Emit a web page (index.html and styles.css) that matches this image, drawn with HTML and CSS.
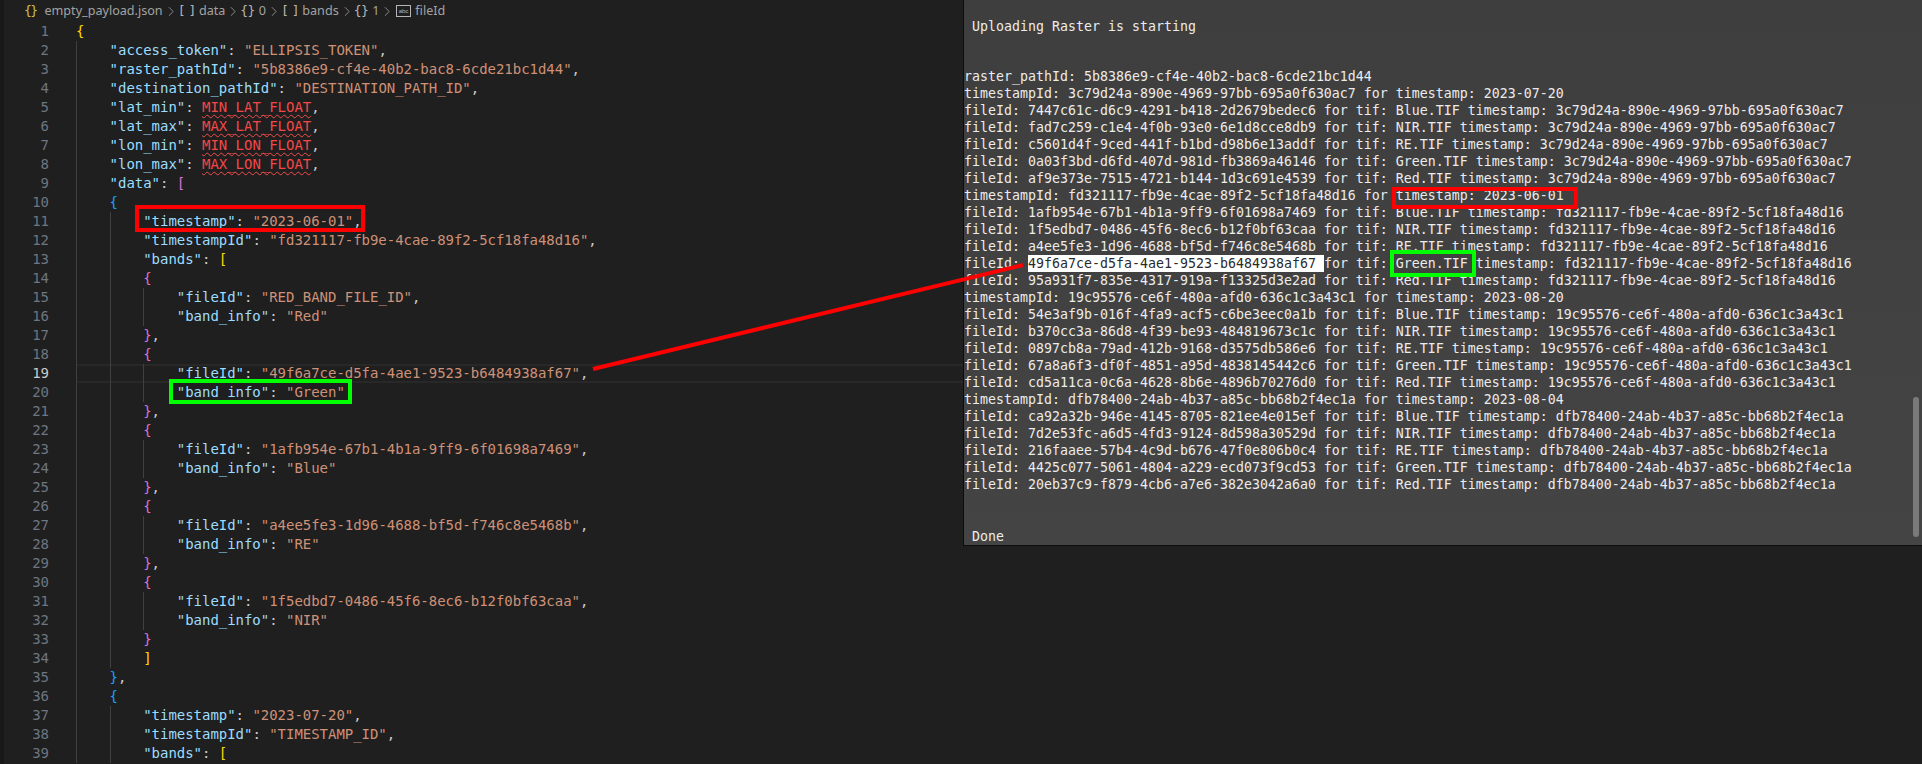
FILE: index.html
```html
<!DOCTYPE html>
<html lang="en">
<head>
<meta charset="utf-8">
<title>empty_payload.json</title>
<link rel="stylesheet" href="styles.css">
</head>
<body>
<main class="editor">
  <nav class="crumbs">
    <span class="ic json">{}</span><span class="c-name">empty_payload.json</span>
    <svg class="chev" viewBox="0 0 7 12"><path d="M1 1l5 5-5 5"/></svg>
    <span class="ic arr">[ ]</span><span>data</span>
    <svg class="chev" viewBox="0 0 7 12"><path d="M1 1l5 5-5 5"/></svg>
    <span class="ic">{}</span><span>0</span>
    <svg class="chev" viewBox="0 0 7 12"><path d="M1 1l5 5-5 5"/></svg>
    <span class="ic arr">[ ]</span><span>bands</span>
    <svg class="chev" viewBox="0 0 7 12"><path d="M1 1l5 5-5 5"/></svg>
    <span class="ic">{}</span><span>1</span>
    <svg class="chev" viewBox="0 0 7 12"><path d="M1 1l5 5-5 5"/></svg>
    <svg class="abc" viewBox="0 0 15 12"><rect x="0.5" y="0.5" width="14" height="11" fill="none" stroke="#b5b5b5"/><text x="7.5" y="8" text-anchor="middle" font-size="6" font-family="Liberation Sans" fill="#b5b5b5">abc</text></svg>
    <span>fileId</span>
  </nav>
  <div class="code">
    <div class="ln"><b>1</b><code><u class="gold">{</u></code></div>
    <div class="ln"><b>2</b><code><i></i><s>"access_token"</s>: <q>"ELLIPSIS_TOKEN"</q>,</code></div>
    <div class="ln"><b>3</b><code><i></i><s>"raster_pathId"</s>: <q>"5b8386e9-cf4e-40b2-bac8-6cde21bc1d44"</q>,</code></div>
    <div class="ln"><b>4</b><code><i></i><s>"destination_pathId"</s>: <q>"DESTINATION_PATH_ID"</q>,</code></div>
    <div class="ln"><b>5</b><code><i></i><s>"lat_min"</s>: <em>MIN_LAT_FLOAT</em>,</code></div>
    <div class="ln"><b>6</b><code><i></i><s>"lat_max"</s>: <em>MAX_LAT_FLOAT</em>,</code></div>
    <div class="ln"><b>7</b><code><i></i><s>"lon_min"</s>: <em>MIN_LON_FLOAT</em>,</code></div>
    <div class="ln"><b>8</b><code><i></i><s>"lon_max"</s>: <em>MAX_LON_FLOAT</em>,</code></div>
    <div class="ln"><b>9</b><code><i></i><s>"data"</s>: <u class="pink">[</u></code></div>
    <div class="ln"><b>10</b><code><i></i><u class="blue">{</u></code></div>
    <div class="ln"><b>11</b><code><i></i><i></i><s>"timestamp"</s>: <q>"2023-06-01"</q>,</code></div>
    <div class="ln"><b>12</b><code><i></i><i></i><s>"timestampId"</s>: <q>"fd321117-fb9e-4cae-89f2-5cf18fa48d16"</q>,</code></div>
    <div class="ln"><b>13</b><code><i></i><i></i><s>"bands"</s>: <u class="gold">[</u></code></div>
    <div class="ln"><b>14</b><code><i></i><i></i><u class="pink">{</u></code></div>
    <div class="ln"><b>15</b><code><i></i><i></i><i></i><s>"fileId"</s>: <q>"RED_BAND_FILE_ID"</q>,</code></div>
    <div class="ln"><b>16</b><code><i></i><i></i><i></i><s>"band_info"</s>: <q>"Red"</q></code></div>
    <div class="ln"><b>17</b><code><i></i><i></i><u class="pink">}</u>,</code></div>
    <div class="ln"><b>18</b><code><i></i><i></i><u class="pink">{</u></code></div>
    <div class="ln active"><b>19</b><code><i></i><i></i><i></i><s>"fileId"</s>: <q>"49f6a7ce-d5fa-4ae1-9523-b6484938af67"</q>,</code></div>
    <div class="ln"><b>20</b><code><i></i><i></i><i></i><s>"band_info"</s>: <q>"Green"</q></code></div>
    <div class="ln"><b>21</b><code><i></i><i></i><u class="pink">}</u>,</code></div>
    <div class="ln"><b>22</b><code><i></i><i></i><u class="pink">{</u></code></div>
    <div class="ln"><b>23</b><code><i></i><i></i><i></i><s>"fileId"</s>: <q>"1afb954e-67b1-4b1a-9ff9-6f01698a7469"</q>,</code></div>
    <div class="ln"><b>24</b><code><i></i><i></i><i></i><s>"band_info"</s>: <q>"Blue"</q></code></div>
    <div class="ln"><b>25</b><code><i></i><i></i><u class="pink">}</u>,</code></div>
    <div class="ln"><b>26</b><code><i></i><i></i><u class="pink">{</u></code></div>
    <div class="ln"><b>27</b><code><i></i><i></i><i></i><s>"fileId"</s>: <q>"a4ee5fe3-1d96-4688-bf5d-f746c8e5468b"</q>,</code></div>
    <div class="ln"><b>28</b><code><i></i><i></i><i></i><s>"band_info"</s>: <q>"RE"</q></code></div>
    <div class="ln"><b>29</b><code><i></i><i></i><u class="pink">}</u>,</code></div>
    <div class="ln"><b>30</b><code><i></i><i></i><u class="pink">{</u></code></div>
    <div class="ln"><b>31</b><code><i></i><i></i><i></i><s>"fileId"</s>: <q>"1f5edbd7-0486-45f6-8ec6-b12f0bf63caa"</q>,</code></div>
    <div class="ln"><b>32</b><code><i></i><i></i><i></i><s>"band_info"</s>: <q>"NIR"</q></code></div>
    <div class="ln"><b>33</b><code><i></i><i></i><u class="pink">}</u></code></div>
    <div class="ln"><b>34</b><code><i></i><i></i><u class="gold">]</u></code></div>
    <div class="ln"><b>35</b><code><i></i><u class="blue">}</u>,</code></div>
    <div class="ln"><b>36</b><code><i></i><u class="blue">{</u></code></div>
    <div class="ln"><b>37</b><code><i></i><i></i><s>"timestamp"</s>: <q>"2023-07-20"</q>,</code></div>
    <div class="ln"><b>38</b><code><i></i><i></i><s>"timestampId"</s>: <q>"TIMESTAMP_ID"</q>,</code></div>
    <div class="ln"><b>39</b><code><i></i><i></i><s>"bands"</s>: <u class="gold">[</u></code></div>
  </div>
</main>

<section class="term">
  <p class="note first">Uploading Raster is starting</p>
  <div class="log">
    <div>raster_pathId: 5b8386e9-cf4e-40b2-bac8-6cde21bc1d44</div>
    <div>timestampId: 3c79d24a-890e-4969-97bb-695a0f630ac7 for timestamp: 2023-07-20</div>
    <div>fileId: 7447c61c-d6c9-4291-b418-2d2679bedec6 for tif: Blue.TIF timestamp: 3c79d24a-890e-4969-97bb-695a0f630ac7</div>
    <div>fileId: fad7c259-c1e4-4f0b-93e0-6e1d8cce8db9 for tif: NIR.TIF timestamp: 3c79d24a-890e-4969-97bb-695a0f630ac7</div>
    <div>fileId: c5601d4f-9ced-441f-b1bd-d98b6e13addf for tif: RE.TIF timestamp: 3c79d24a-890e-4969-97bb-695a0f630ac7</div>
    <div>fileId: 0a03f3bd-d6fd-407d-981d-fb3869a46146 for tif: Green.TIF timestamp: 3c79d24a-890e-4969-97bb-695a0f630ac7</div>
    <div>fileId: af9e373e-7515-4721-b144-1d3c691e4539 for tif: Red.TIF timestamp: 3c79d24a-890e-4969-97bb-695a0f630ac7</div>
    <div>timestampId: fd321117-fb9e-4cae-89f2-5cf18fa48d16 for timestamp: 2023-06-01</div>
    <div>fileId: 1afb954e-67b1-4b1a-9ff9-6f01698a7469 for tif: Blue.TIF timestamp: fd321117-fb9e-4cae-89f2-5cf18fa48d16</div>
    <div>fileId: 1f5edbd7-0486-45f6-8ec6-b12f0bf63caa for tif: NIR.TIF timestamp: fd321117-fb9e-4cae-89f2-5cf18fa48d16</div>
    <div>fileId: a4ee5fe3-1d96-4688-bf5d-f746c8e5468b for tif: RE.TIF timestamp: fd321117-fb9e-4cae-89f2-5cf18fa48d16</div>
    <div>fileId: <span class="hl">49f6a7ce-d5fa-4ae1-9523-b6484938af67 </span>for tif: Green.TIF timestamp: fd321117-fb9e-4cae-89f2-5cf18fa48d16</div>
    <div>fileId: 95a931f7-835e-4317-919a-f13325d3e2ad for tif: Red.TIF timestamp: fd321117-fb9e-4cae-89f2-5cf18fa48d16</div>
    <div>timestampId: 19c95576-ce6f-480a-afd0-636c1c3a43c1 for timestamp: 2023-08-20</div>
    <div>fileId: 54e3af9b-016f-4fa9-acf5-c6be3eec0a1b for tif: Blue.TIF timestamp: 19c95576-ce6f-480a-afd0-636c1c3a43c1</div>
    <div>fileId: b370cc3a-86d8-4f39-be93-484819673c1c for tif: NIR.TIF timestamp: 19c95576-ce6f-480a-afd0-636c1c3a43c1</div>
    <div>fileId: 0897cb8a-79ad-412b-9168-d3575db586e6 for tif: RE.TIF timestamp: 19c95576-ce6f-480a-afd0-636c1c3a43c1</div>
    <div>fileId: 67a8a6f3-df0f-4851-a95d-4838145442c6 for tif: Green.TIF timestamp: 19c95576-ce6f-480a-afd0-636c1c3a43c1</div>
    <div>fileId: cd5a11ca-0c6a-4628-8b6e-4896b70276d0 for tif: Red.TIF timestamp: 19c95576-ce6f-480a-afd0-636c1c3a43c1</div>
    <div>timestampId: dfb78400-24ab-4b37-a85c-bb68b2f4ec1a for timestamp: 2023-08-04</div>
    <div>fileId: ca92a32b-946e-4145-8705-821ee4e015ef for tif: Blue.TIF timestamp: dfb78400-24ab-4b37-a85c-bb68b2f4ec1a</div>
    <div>fileId: 7d2e53fc-a6d5-4fd3-9124-8d598a30529d for tif: NIR.TIF timestamp: dfb78400-24ab-4b37-a85c-bb68b2f4ec1a</div>
    <div>fileId: 216faaee-57b4-4c9d-b676-47f0e806b0c4 for tif: RE.TIF timestamp: dfb78400-24ab-4b37-a85c-bb68b2f4ec1a</div>
    <div>fileId: 4425c077-5061-4804-a229-ecd073f9cd53 for tif: Green.TIF timestamp: dfb78400-24ab-4b37-a85c-bb68b2f4ec1a</div>
    <div>fileId: 20eb37c9-f879-4cb6-a7e6-382e3042a6a0 for tif: Red.TIF timestamp: dfb78400-24ab-4b37-a85c-bb68b2f4ec1a</div>
  </div>
  <p class="note last">Done</p>
  <div class="thumb"></div>
</section>

<div class="mark red mark-a"></div>
<div class="mark green mark-b"></div>
<div class="mark red mark-c"></div>
<div class="mark green mark-d"></div>
<svg class="arrow" viewBox="0 0 1922 764"><line x1="593" y1="369" x2="1023" y2="265"/></svg>
</body>
</html>
```
FILE: styles.css
```css
* { box-sizing: border-box; }
html, body { margin: 0; height: 764px; overflow: hidden; background: #1f1f1f; }
body { position: relative; width: 1922px; }

.editor { border-left: 4px solid #181818; height: 764px; }

.crumbs {
  display: flex;
  align-items: center;
  height: 22px;
  padding-left: 20px;
  font: 12.6px/22px "Noto Sans", sans-serif;
  color: #a3a3a3;
  white-space: nowrap;
}
.ic { color: #b5b5b5; font: 13px/22px "DejaVu Sans Mono", monospace; letter-spacing: -0.6px; margin-right: 4px; }
.ic.json { color: #c9c243; letter-spacing: -1.6px; margin-right: 8px; }
.ic.arr { letter-spacing: -2.4px; margin-right: 5px; }
.chev { width: 6px; height: 11px; margin: 0 4px 0 5px; fill: none; stroke: #9a9a9a; stroke-width: 1; }
.abc { width: 15px; height: 12px; margin: 0 4px 0 2px; }

.code { font: 14px/19px "DejaVu Sans Mono", monospace; letter-spacing: -0.03px; color: #cccccc; }
.ln { display: flex; height: 19px; }
.ln b { flex: none; width: 45px; text-align: right; font-weight: 400; color: #6e7681; }
.ln code { flex: 1; margin-left: 27px; font: inherit; white-space: pre; }
.ln.active b { color: #cccccc; }
.ln.active code { box-shadow: inset 0 2px 0 #282828, inset 0 -2px 0 #282828; }
.ln i { display: inline-block; width: 33.6px; height: 19px; vertical-align: top; box-shadow: inset 1px 0 0 #404040; }
.ln s { text-decoration: none; color: #9cdcfe; }
.ln q { quotes: none; color: #ce9178; }
.ln q::before, .ln q::after { content: none; }
.ln em { font-style: normal; color: #f44747; text-decoration: underline wavy #f14c4c 1px; text-underline-offset: 2px; }
.ln u { text-decoration: none; }
.gold { color: #ffd700; }
.pink { color: #da70d6; }
.blue { color: #179fff; }

.term {
  position: absolute;
  left: 963px;
  top: 0;
  width: 959px;
  height: 546px;
  background: linear-gradient(#3e3e3e, #444444);
  border-left: 1px solid #0c0c0c;
  border-bottom: 1px solid #0c0c0c;
  font: 13.25px/17px "DejaVu Sans Mono", monospace;
  letter-spacing: 0.02px;
  color: #ececec;
}
.note { margin: 0; padding-left: 8px; }
.note.first { padding-top: 18px; }
.log { margin-top: 33px; }
.log div { white-space: pre; }
.note.last { margin-top: 35px; }
.hl { display: inline-block; background: #fff; color: #2a2a2a; }
.thumb { position: absolute; right: 3px; top: 397px; width: 6px; height: 140px; border-radius: 3px; background: #7a7a7a; }

.mark { position: absolute; }
.red { border: 4px solid #ff0000; }
.green { border: 4px solid #00ff00; }
.mark-a { left: 135px; top: 205px; width: 230px; height: 27px; }
.mark-b { left: 169px; top: 379px; width: 183px; height: 25px; }
.mark-c { left: 1392px; top: 187px; width: 186px; height: 22px; }
.mark-d { left: 1390px; top: 250px; width: 86px; height: 27px; }

.arrow { position: absolute; left: 0; top: 0; width: 1922px; height: 764px; pointer-events: none; }
.arrow line { stroke: #ff0000; stroke-width: 4; }
```
